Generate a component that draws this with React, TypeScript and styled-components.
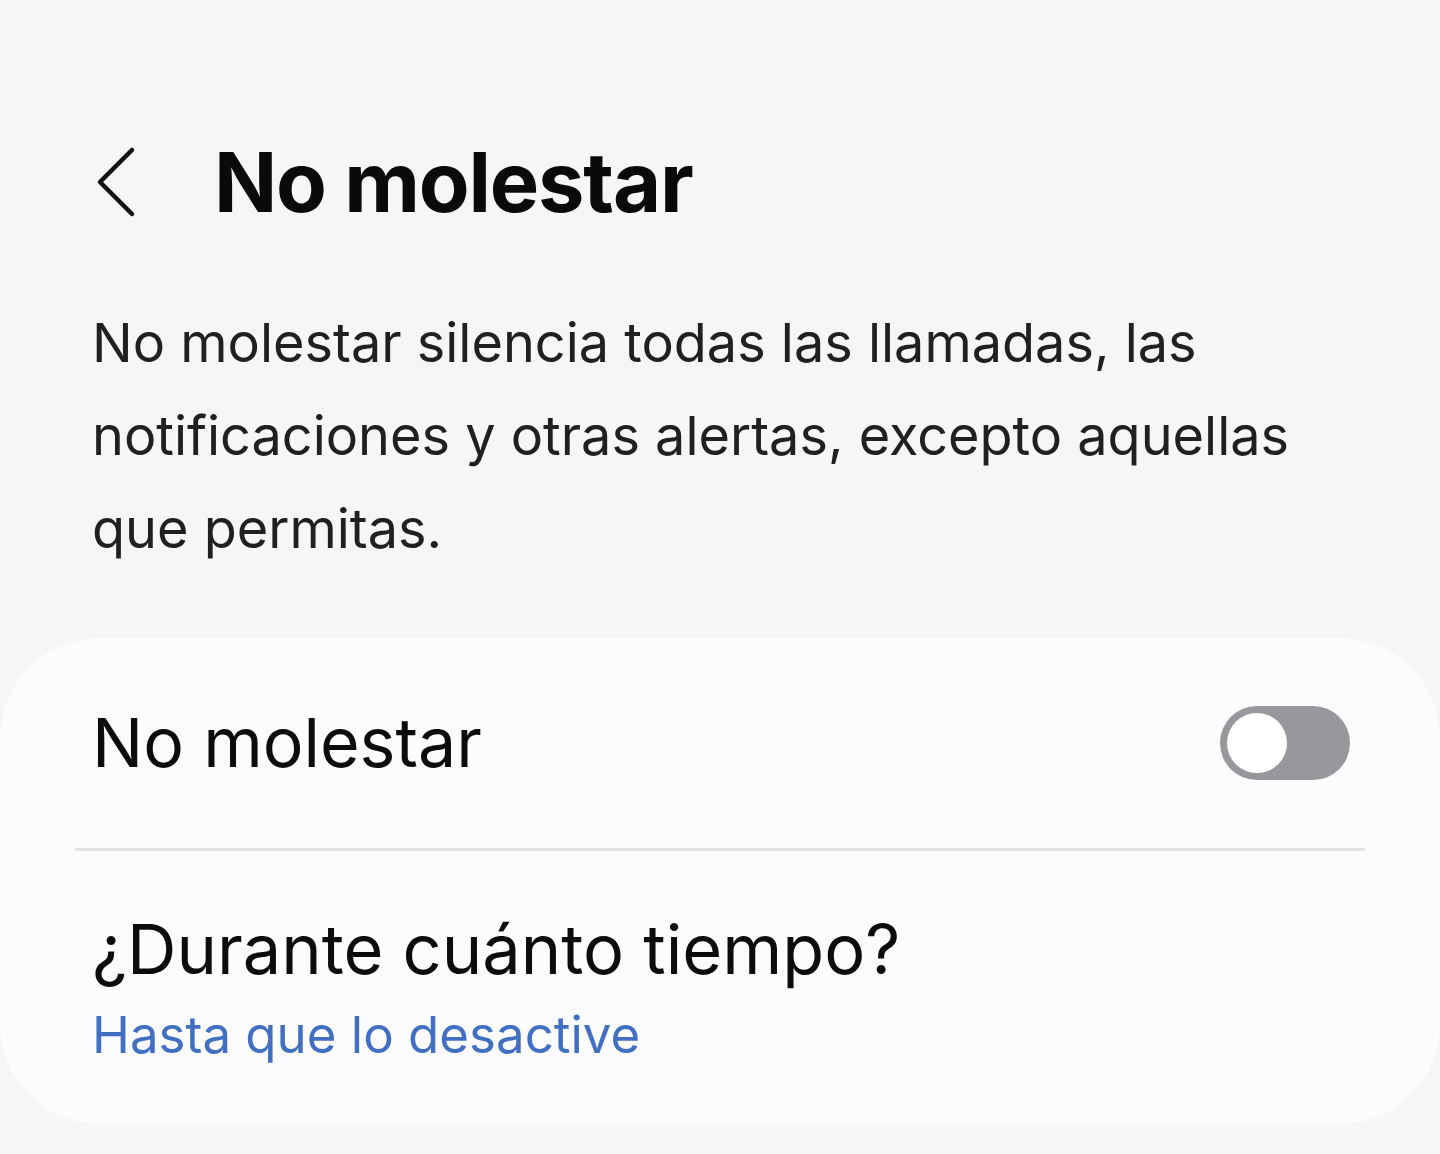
import React from "react";
import styled, { createGlobalStyle } from "styled-components";

const Global = createGlobalStyle`
  html, body { margin: 0; padding: 0; background: #f6f6f8; }
  body { font-family: Inter, "Noto Sans", sans-serif; -webkit-font-smoothing: antialiased; }
`;

const Page = styled.div`
  width: 1440px;
  height: 1154px;
  overflow: hidden;
  background: #f6f6f8;
  display: flex;
  flex-direction: column;
`;

const Header = styled.header`
  display: flex;
  align-items: center;
  height: 120px;
  margin-top: 122px;
  padding-left: 88px;
  gap: 70px;
`;

const BackButton = styled.button`
  border: 0;
  background: none;
  padding: 0;
  width: 56px;
  height: 72px;
  display: flex;
  align-items: center;
  justify-content: center;
  color: #111;
`;

const Title = styled.h1`
  margin: 0;
  font-size: 83px;
  font-weight: 700;
  letter-spacing: -1.2px;
  color: #0a0a0a;
  line-height: 1;
`;

const Description = styled.p`
  margin: 54px 0 0 92px;
  width: 1260px;
  font-size: 54px;
  line-height: 93px;
  color: #202020;
  font-weight: 400;
`;

const Card = styled.section`
  margin-top: 63px;
  background: #fcfcfe;
  border-radius: 100px;
  height: 486px;
  display: flex;
  flex-direction: column;
`;

const ToggleRow = styled.div`
  display: flex;
  align-items: center;
  justify-content: space-between;
  height: 210px;
  padding: 0 90px 0 92px;
`;

const RowLabel = styled.span<{ $size?: number }>`
  font-size: ${(p) => p.$size ?? 68}px;
  color: #0c0c0c;
  font-weight: 400;
  line-height: 1.2;
`;

const Switch = styled.div`
  width: 130px;
  height: 74px;
  border-radius: 37px;
  background: #98989c;
  display: flex;
  align-items: center;
  padding-left: 7px;
  box-sizing: border-box;
`;

const Knob = styled.div`
  width: 60px;
  height: 60px;
  border-radius: 50%;
  background: #fff;
`;

const Divider = styled.hr`
  margin: 0 75px;
  border: 0;
  height: 3px;
  background: #e4e4e6;
`;

const DurationRow = styled.div`
  display: flex;
  flex-direction: column;
  padding: 58px 92px 0;
`;

const Sub = styled.span`
  font-size: 51px;
  color: #4170c2;
  margin-top: 13px;
  line-height: 1.2;
`;

export default function App() {
  return (
    <Page>
      <Global />
      <Header>
        <BackButton aria-label="Atrás">
          <svg width="48" height="72" viewBox="0 0 48 72" fill="none">
            <path d="M40 4 L8 36 L40 68" stroke="#111" strokeWidth="4.5" strokeLinecap="round" strokeLinejoin="round" />
          </svg>
        </BackButton>
        <Title>No molestar</Title>
      </Header>
      <Description>
        No molestar silencia todas las llamadas, las notificaciones y otras alertas, excepto aquellas que permitas.
      </Description>
      <Card>
        <ToggleRow>
          <RowLabel>No molestar</RowLabel>
          <Switch>
            <Knob />
          </Switch>
        </ToggleRow>
        <Divider />
        <DurationRow>
          <RowLabel $size={68.5}>¿Durante cuánto tiempo?</RowLabel>
          <Sub>Hasta que lo desactive</Sub>
        </DurationRow>
      </Card>
    </Page>
  );
}
